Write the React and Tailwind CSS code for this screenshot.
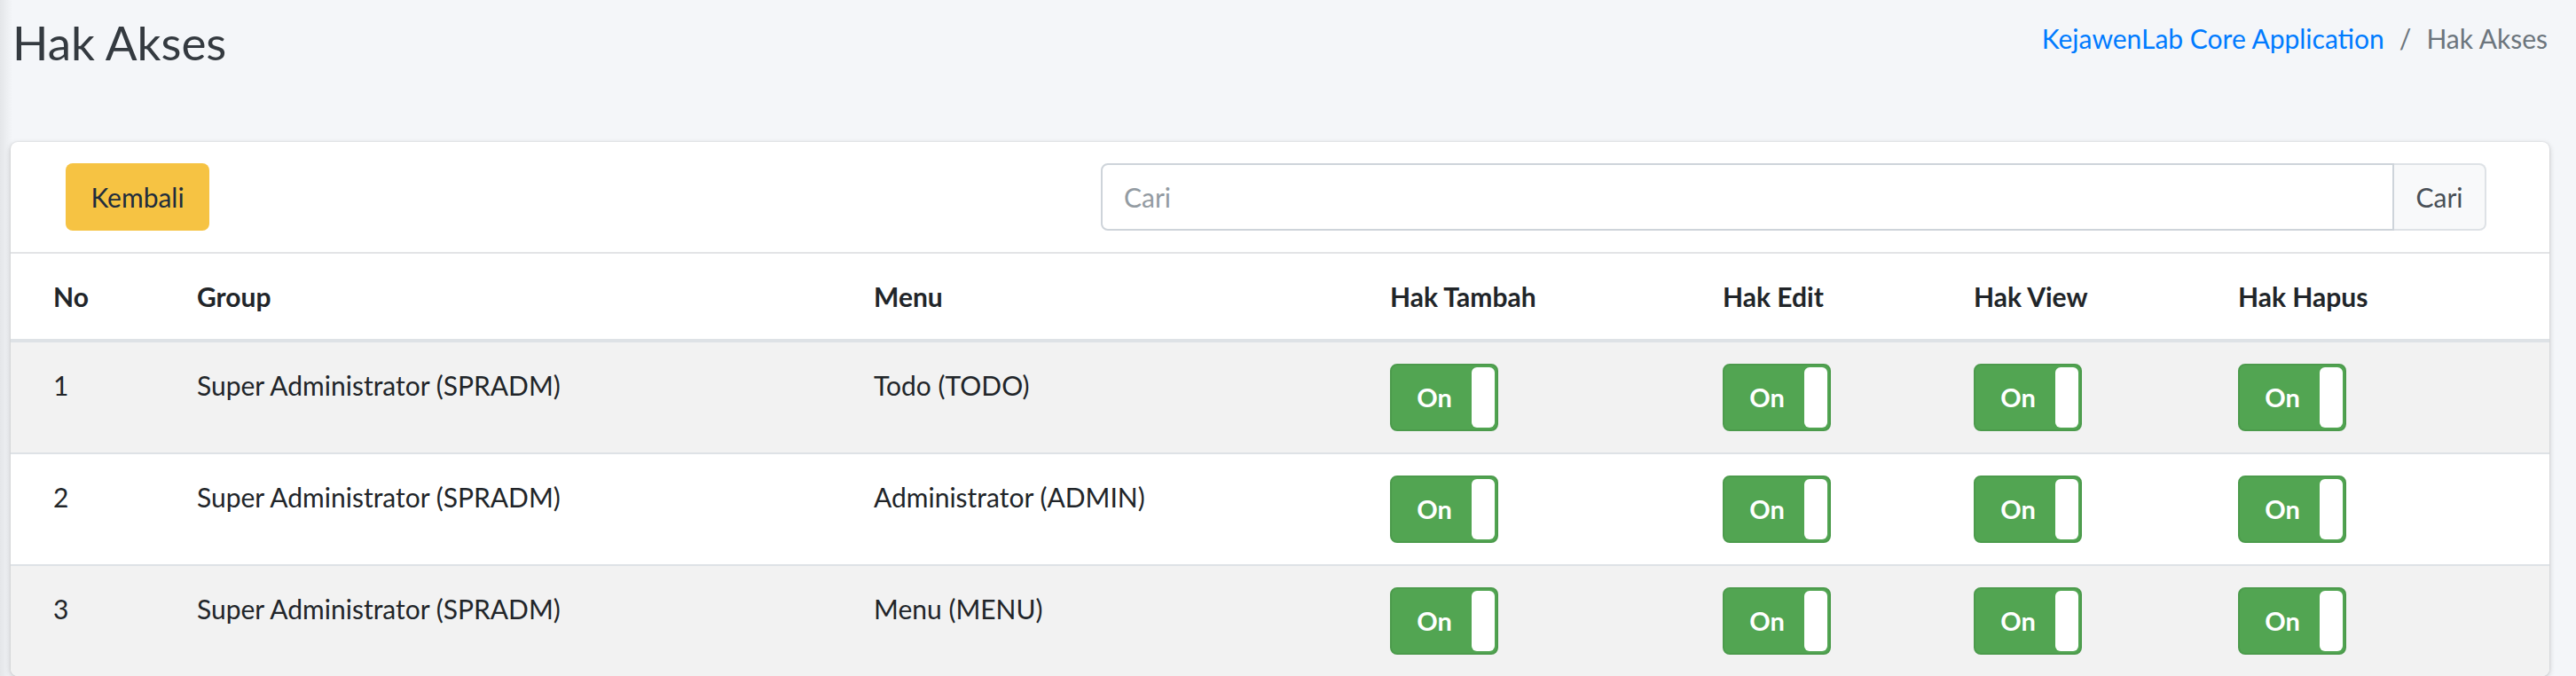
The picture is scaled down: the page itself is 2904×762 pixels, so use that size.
import React from 'react';

const rows = [
  { no: 1, group: 'Super Administrator (SPRADM)', menu: 'Todo (TODO)' },
  { no: 2, group: 'Super Administrator (SPRADM)', menu: 'Administrator (ADMIN)' },
  { no: 3, group: 'Super Administrator (SPRADM)', menu: 'Menu (MENU)' },
];

const cols = 'grid grid-cols-[162px_763px_582px_375px_283px_298px_1fr]';

// Bootstrap-toggle style switch
const Toggle = () => (
  <div className="flex h-[76px] w-[122px] items-stretch rounded-[8px] border-2 border-[#4c9b4c] bg-[#52a552] p-[2px]">
    <span className="flex flex-1 items-center justify-center pl-[4px] text-[29px] font-bold text-white">On</span>
    <span className="w-[26px] rounded-[6px] bg-white" />
  </div>
);

const App = () => {
  return (
    <div className="min-h-screen bg-[#f4f6f9] bg-[linear-gradient(to_right,#e4e6e9,#f4f6f9_14px)] font-['Lato',sans-serif] text-[30px] leading-[48px] text-[#212529]">
      {/* Content header */}
      <div className="flex h-[160px] items-start justify-between pl-[14px] pr-[32px]">
        <h1 className="mt-[16px] text-[53px] font-normal leading-[1.2] text-[#343a40]">Hak Akses</h1>
        <div className="mt-[19px] flex items-center text-[30px]">
          <a className="text-[#007bff]">KejawenLab Core Application</a>
          <span className="px-[17px] text-[#6c757d]">/</span>
          <span className="text-[#6c757d]">Hak Akses</span>
        </div>
      </div>

      {/* Card */}
      <div className="ml-[12px] mr-[30px] overflow-hidden rounded-[8px] bg-white shadow-[0_0_2px_rgba(0,0,0,0.125),0_2px_6px_rgba(0,0,0,0.2)]">
        <div className="flex items-center justify-between border-b-2 border-[#e3e4e6] pb-[24px] pl-[62px] pr-[71px] pt-[24px]">
          <button className="h-[76px] w-[162px] rounded-[8px] bg-[#f6c343] text-[30px] text-[#1f2d3d]">Kembali</button>
          <div className="flex h-[76px] w-[1562px]">
            <input
              className="h-full flex-1 rounded-l-[8px] border-2 border-[#ced4da] px-[24px] text-[30px] text-[#495057] outline-none placeholder:text-[#939ba2]"
              placeholder="Cari"
            />
            <button className="h-full w-[104px] rounded-r-[8px] border-2 border-l-0 border-[#dee2e6] bg-[#f8f9fa] text-[30px] text-[#495057]">Cari</button>
          </div>
        </div>

        {/* Table */}
        <div className={`${cols} border-b-2 border-[#dee2e6] font-bold`}>
          {['No', 'Group', 'Menu', 'Hak Tambah', 'Hak Edit', 'Hak View', 'Hak Hapus'].map((h) => (
            <div key={h} className="py-[24px] pl-[48px]">{h}</div>
          ))}
        </div>
        {rows.map((r, i) => (
          <div key={r.no} className={`${cols} border-t-2 border-[#dee2e6] ${i % 2 === 0 ? 'bg-[#f2f2f2]' : 'bg-white'}`}>
            <div className="py-[24px] pl-[48px]">{r.no}</div>
            <div className="py-[24px] pl-[48px]">{r.group}</div>
            <div className="py-[24px] pl-[48px]">{r.menu}</div>
            {[0, 1, 2, 3].map((k) => (
              <div key={k} className="py-[24px] pl-[48px]">
                <Toggle />
              </div>
            ))}
          </div>
        ))}
      </div>
    </div>
  );
};

export default App;
